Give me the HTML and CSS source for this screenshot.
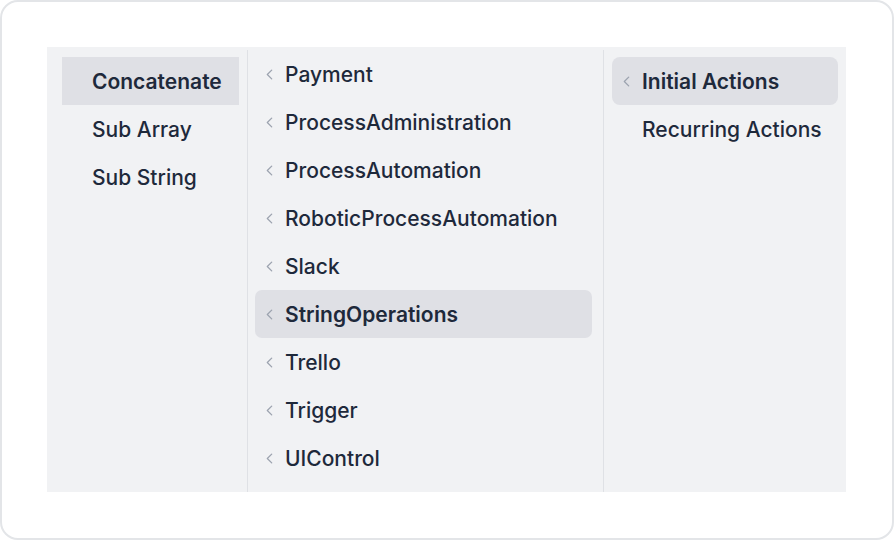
FILE: index.html
```html
<!DOCTYPE html>
<html>
<head>
<meta charset="utf-8">
<link rel="stylesheet" href="styles.css">
</head>
<body>
<div class="card">
  <div class="panel">
    <div class="col col1">
      <div class="item active"><span class="chev hidden"></span><span class="label strong">Concatenate</span></div>
      <div class="item"><span class="chev hidden"></span><span class="label">Sub Array</span></div>
      <div class="item"><span class="chev hidden"></span><span class="label">Sub String</span></div>
    </div>
    <div class="col col2">
      <div class="item"><svg class="chev" viewBox="0 0 8 12"><path d="M6.5 1 L1.5 6 L6.5 11"/></svg><span class="label">Payment</span></div>
      <div class="item"><svg class="chev" viewBox="0 0 8 12"><path d="M6.5 1 L1.5 6 L6.5 11"/></svg><span class="label">ProcessAdministration</span></div>
      <div class="item"><svg class="chev" viewBox="0 0 8 12"><path d="M6.5 1 L1.5 6 L6.5 11"/></svg><span class="label">ProcessAutomation</span></div>
      <div class="item"><svg class="chev" viewBox="0 0 8 12"><path d="M6.5 1 L1.5 6 L6.5 11"/></svg><span class="label">RoboticProcessAutomation</span></div>
      <div class="item"><svg class="chev" viewBox="0 0 8 12"><path d="M6.5 1 L1.5 6 L6.5 11"/></svg><span class="label">Slack</span></div>
      <div class="item active rounded"><svg class="chev" viewBox="0 0 8 12"><path d="M6.5 1 L1.5 6 L6.5 11"/></svg><span class="label strong">StringOperations</span></div>
      <div class="item"><svg class="chev" viewBox="0 0 8 12"><path d="M6.5 1 L1.5 6 L6.5 11"/></svg><span class="label">Trello</span></div>
      <div class="item"><svg class="chev" viewBox="0 0 8 12"><path d="M6.5 1 L1.5 6 L6.5 11"/></svg><span class="label">Trigger</span></div>
      <div class="item"><svg class="chev" viewBox="0 0 8 12"><path d="M6.5 1 L1.5 6 L6.5 11"/></svg><span class="label">UIControl</span></div>
    </div>
    <div class="col col3">
      <div class="item active rounded-lg"><svg class="chev" viewBox="0 0 8 12"><path d="M6.5 1 L1.5 6 L6.5 11"/></svg><span class="label strong">Initial Actions</span></div>
      <div class="item"><span class="chev hidden"></span><span class="label">Recurring Actions</span></div>
    </div>
  </div>
</div>
</body>
</html>
```

FILE: styles.css
```css
html, body {
  margin: 0;
  padding: 0;
  background: #ffffff;
}
body {
  font-family: Inter, "Noto Sans", sans-serif;
  color: #1e293b;
}
.card {
  box-sizing: border-box;
  width: 894px;
  height: 540px;
  border: 2px solid #e3e5e8;
  border-radius: 18px;
  padding: 45px 46px 46px 45px;
  background: #ffffff;
}
.panel {
  display: grid;
  grid-template-columns: 201px 356px 1fr;
  height: 100%;
  background: #f1f2f4;
  padding-top: 3px;
  box-sizing: border-box;
}
.col {
  display: flex;
  flex-direction: column;
}
.col1 {
  border-right: 1px solid #dfe1e5;
  padding: 7px 8px 0 15px;
}
.col2 {
  border-right: 1px solid #dfe1e5;
  padding: 0 11px 0 7px;
}
.col3 {
  padding: 7px 8px 0 8px;
}
.item {
  height: 48px;
  display: flex;
  align-items: center;
  gap: 12px;
  padding-left: 11px;
  flex-shrink: 0;
}
.item.active {
  background: #dfe0e5;
}
.item.rounded {
  border-radius: 7px;
}
.item.rounded-lg {
  border-radius: 8px;
}
.chev {
  width: 7px;
  height: 11px;
  flex-shrink: 0;
  fill: none;
  stroke: #9ca3af;
  stroke-width: 1.5;
  stroke-linecap: round;
  stroke-linejoin: round;
}
.chev.hidden {
  display: inline-block;
}
.label {
  font-size: 21px;
  font-weight: 500;
  letter-spacing: 0;
  white-space: nowrap;
}
.label.strong {
  font-weight: 600;
}
```
